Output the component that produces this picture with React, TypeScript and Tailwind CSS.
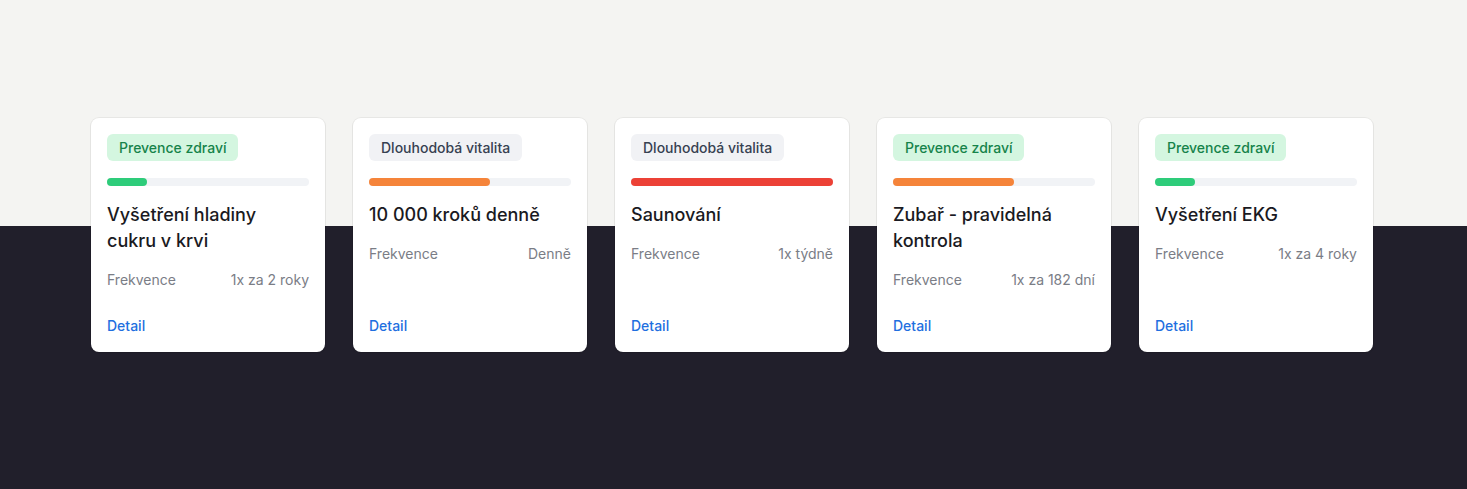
import React from "react";

type Item = {
  tag: "green" | "gray";
  label: string;
  progress: number;
  bar: string;
  title: string;
  freq: string;
};

const items: Item[] = [
  { tag: "green", label: "Prevence zdraví", progress: 20, bar: "bg-[#2ecc7a]", title: "Vyšetření hladiny cukru v krvi", freq: "1x za 2 roky" },
  { tag: "gray", label: "Dlouhodobá vitalita", progress: 60, bar: "bg-[#f5843a]", title: "10 000 kroků denně", freq: "Denně" },
  { tag: "gray", label: "Dlouhodobá vitalita", progress: 100, bar: "bg-[#ec4136]", title: "Saunování", freq: "1x týdně" },
  { tag: "green", label: "Prevence zdraví", progress: 60, bar: "bg-[#f5843a]", title: "Zubař - pravidelná kontrola", freq: "1x za 182 dní" },
  { tag: "green", label: "Prevence zdraví", progress: 20, bar: "bg-[#2ecc7a]", title: "Vyšetření EKG", freq: "1x za 4 roky" },
];

function Card({ item }: { item: Item }) {
  return (
    <div className="flex h-[234px] w-[234px] flex-col rounded-lg bg-white p-4 shadow-[0_1px_2px_rgba(0,0,0,0.06)] ring-1 ring-black/5">
      <div className="flex">
        <span
          className={
            item.tag === "green"
              ? "rounded-md bg-[#d4f6e0] px-3 py-[4px] text-[14px] leading-[19px] font-medium text-[#16834a]"
              : "rounded-md bg-[#f1f2f5] px-3 py-[4px] text-[14px] leading-[19px] font-medium text-[#374151]"
          }
        >
          {item.label}
        </span>
      </div>
      <div className="mt-[17px] h-2 w-full rounded-full bg-[#f1f3f6]">
        <div className={`h-2 rounded-full ${item.bar}`} style={{ width: `${item.progress}%` }} />
      </div>
      <h3 className="mt-4 text-[18px] leading-[26px] font-medium text-[#1a1a22]">{item.title}</h3>
      <div className="mt-4 flex justify-between text-[14px] leading-5 text-[#7a7d86]">
        <span>Frekvence</span>
        <span>{item.freq}</span>
      </div>
      <a className="mt-auto text-[14px] leading-5 font-medium text-[#1f6fe0]">Detail</a>
    </div>
  );
}

export default function App() {
  return (
    <div
      className="min-h-[489px] w-full bg-[linear-gradient(to_bottom,#f4f4f2_226px,#211f2b_226px)] pt-[118px]"
      style={{ fontFamily: "Inter, 'Noto Sans', sans-serif" }}
    >
      <div className="flex justify-center gap-7 pr-[3px]">
        {items.map((it, i) => (
          <Card key={i} item={it} />
        ))}
      </div>
    </div>
  );
}
